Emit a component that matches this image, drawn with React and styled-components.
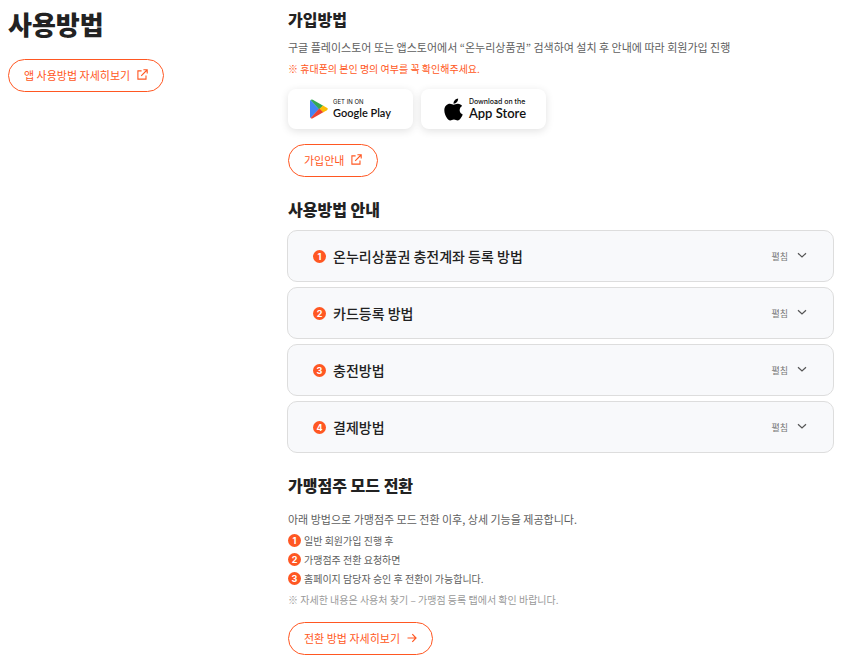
import React, { useState } from "react";
import styled, { createGlobalStyle } from "styled-components";
import { FaApple } from "react-icons/fa";

const GlobalStyle = createGlobalStyle`
  * {
    box-sizing: border-box;
  }

  body {
    margin: 0;
    background: #fff;
    color: #222;
    font-family: "Noto Sans CJK KR", sans-serif;
  }
`;

const Page = styled.main`
  display: grid;
  grid-template-columns: 272px 1fr;
  column-gap: 8px;
  padding: 8px 12px 12px 8px;
`;

const Side = styled.div`
  display: flex;
  flex-direction: column;
  align-items: flex-start;
  gap: 19px;
`;

const Title = styled.h1`
  margin: 0;
  font-size: 26px;
  font-weight: 900;
  line-height: 32px;
`;

const Content = styled.div`
  display: flex;
  flex-direction: column;
  gap: 21px;
  min-width: 0;
`;

const Section = styled.section`
  display: flex;
  flex-direction: column;
  align-items: flex-start;
`;

const SectionTitle = styled.h2`
  margin: 0;
  font-size: 16px;
  font-weight: 900;
  line-height: 22px;
`;

const Text = styled.p`
  margin: ${(props) => props.$top}px 0 0;
  color: #5e5e5e;
  font-size: 11px;
  line-height: 20px;
`;

const Note = styled.p`
  margin: 2px 0 0;
  color: ${(props) => (props.$strong ? "#ff5722" : "#999")};
  font-size: 10px;
  line-height: 20px;
`;

const PillLink = styled.a`
  display: inline-flex;
  align-items: center;
  gap: 7px;
  height: 33px;
  margin-top: ${(props) => props.$top || 0}px;
  padding: 0 15px 2px;
  border: 1px solid #ff5722;
  border-radius: 17px;
  background: #fff;
  color: #ff5722;
  font-size: 11px;
  line-height: 16px;
  text-decoration: none;
`;

const StoreList = styled.div`
  display: flex;
  gap: 8px;
  margin-top: 10px;
`;

const StoreLink = styled.a`
  display: flex;
  align-items: center;
  justify-content: center;
  gap: ${(props) => props.$gap}px;
  width: 125px;
  height: 40px;
  border-radius: 8px;
  background: #fff;
  box-shadow: 0 2px 8px rgba(0, 0, 0, 0.12);
  color: #111;
  text-decoration: none;
`;

const StoreText = styled.span`
  display: flex;
  flex-direction: column;
  font-family: Lato, sans-serif;
  font-size: ${(props) => props.$size}px;
  font-weight: 600;
  line-height: 14px;
  white-space: nowrap;
`;

const StoreCaption = styled.small`
  font-family: Inter, sans-serif;
  font-size: ${(props) => props.$size}px;
  font-weight: ${(props) => props.$weight};
  line-height: 8px;
`;

const Accordion = styled.div`
  display: flex;
  flex-direction: column;
  align-self: stretch;
  gap: 5px;
  margin: 10px 0 0 -1px;
`;

const AccordionButton = styled.button`
  display: flex;
  align-items: center;
  height: 52px;
  padding: 0 26px 0 25px;
  border: 1px solid #ddd;
  border-radius: 10px;
  background: #f8f9fb;
  color: #222;
  font-family: inherit;
  text-align: left;
  cursor: pointer;
`;

const AccordionTitle = styled.span`
  flex: 1;
  margin-left: 7px;
  font-size: 14px;
  font-weight: 500;
  line-height: 20px;
`;

const AccordionState = styled.span`
  display: flex;
  align-items: center;
  gap: 9px;
  color: #777;
  font-size: 9px;
`;

const Badge = styled.span`
  display: inline-flex;
  align-items: center;
  justify-content: center;
  flex: none;
  width: 13px;
  height: 13px;
  border-radius: 50%;
  background: #ff5722;
  color: #fff;
  font-family: Inter, sans-serif;
  font-size: 9px;
  font-weight: 700;
  line-height: 13px;
`;

const StepList = styled.ol`
  margin: 2px 0 0;
  padding: 0;
  list-style: none;
`;

const Step = styled.li`
  display: flex;
  align-items: center;
  gap: 3px;
  color: #5e5e5e;
  font-size: 10px;
  line-height: 19px;
`;

const ExternalIcon = () => (
  <svg width="11" height="11" viewBox="0 0 11 11" fill="none" stroke="currentColor" strokeWidth="1.1">
    <path d="M4.6 1.9H0.9V10.1H9V6.4M6.4 0.8H10.2V4.6M10 1L4.2 6.8" />
  </svg>
);

const ArrowIcon = () => (
  <svg width="10" height="10" viewBox="0 0 10 10" fill="none" stroke="currentColor" strokeWidth="1.2">
    <path d="M0.5 5H9M5.3 1.2L9 5L5.3 8.8" />
  </svg>
);

const ChevronIcon = () => (
  <svg width="10" height="10" viewBox="0 0 10 10" fill="none" stroke="#555" strokeWidth="1.2">
    <path d="M1 2.2L5 6L9 2.2" />
  </svg>
);

const GooglePlayIcon = () => (
  <svg width="18" height="20" viewBox="0 0 18 20">
    <path d="M0.6 0.9L9.3 10L0.6 19.1Q0 18.6 0 17.8V2.2Q0 1.4 0.6 0.9Z" fill="#4285f4" />
    <path d="M0.6 0.9Q1.5 0 2.8 0.7L13.2 6.7L9.3 10.4Z" fill="#34a853" />
    <path d="M13 6.6L16.8 8.8Q18.8 10 16.8 11.2L13 13.4L9.2 10Z" fill="#fbbc04" />
    <path d="M0.6 19.1Q1.5 20 2.8 19.3L13.2 13.3L9.3 9.6Z" fill="#ea4335" />
  </svg>
);

const guides = ["온누리상품권 충전계좌 등록 방법", "카드등록 방법", "충전방법", "결제방법"];

const steps = [
  "일반 회원가입 진행 후",
  "가맹점주 전환 요청하면",
  "홈페이지 담당자 승인 후 전환이 가능합니다.",
];

const App = () => {
  const [opened, setOpened] = useState(null);

  return (
    <>
      <GlobalStyle />
      <Page>
        <Side>
          <Title>사용방법</Title>
          <PillLink href="#app-guide">
            앱 사용방법 자세히보기
            <ExternalIcon />
          </PillLink>
        </Side>

        <Content>
          <Section>
            <SectionTitle>가입방법</SectionTitle>
            <Text $top={7}>
              구글 플레이스토어 또는 앱스토어에서 “온누리상품권” 검색하여 설치 후 안내에 따라 회원가입 진행
            </Text>
            <Note $strong>※ 휴대폰의 본인 명의 여부를 꼭 확인해주세요.</Note>
            <StoreList>
              <StoreLink href="#google-play" $gap={5}>
                <GooglePlayIcon />
                <StoreText $size={11}>
                  <StoreCaption $size={6} $weight={400}>GET IN ON</StoreCaption>
                  Google Play
                </StoreText>
              </StoreLink>
              <StoreLink href="#app-store" $gap={3}>
                <FaApple size={25} color="#000" />
                <StoreText $size={13}>
                  <StoreCaption $size={7} $weight={500}>Download on the</StoreCaption>
                  App Store
                </StoreText>
              </StoreLink>
            </StoreList>
            <PillLink href="#join" $top={15}>
              가입안내
              <ExternalIcon />
            </PillLink>
          </Section>

          <Section>
            <SectionTitle>사용방법 안내</SectionTitle>
            <Accordion>
              {guides.map((title, index) => (
                <AccordionButton
                  key={title}
                  type="button"
                  aria-expanded={opened === index}
                  onClick={() => setOpened(opened === index ? null : index)}
                >
                  <Badge>{index + 1}</Badge>
                  <AccordionTitle>{title}</AccordionTitle>
                  <AccordionState>
                    {opened === index ? "닫힘" : "펼침"}
                    <ChevronIcon />
                  </AccordionState>
                </AccordionButton>
              ))}
            </Accordion>
          </Section>

          <Section>
            <SectionTitle>가맹점주 모드 전환</SectionTitle>
            <Text $top={13}>아래 방법으로 가맹점주 모드 전환 이후, 상세 기능을 제공합니다.</Text>
            <StepList>
              {steps.map((step, index) => (
                <Step key={step}>
                  <Badge>{index + 1}</Badge>
                  {step}
                </Step>
              ))}
            </StepList>
            <Note>※ 자세한 내용은 사용처 찾기 – 가맹점 등록 탭에서 확인 바랍니다.</Note>
            <PillLink href="#switch-guide" $top={12}>
              전환 방법 자세히보기
              <ArrowIcon />
            </PillLink>
          </Section>
        </Content>
      </Page>
    </>
  );
};

export default App;
